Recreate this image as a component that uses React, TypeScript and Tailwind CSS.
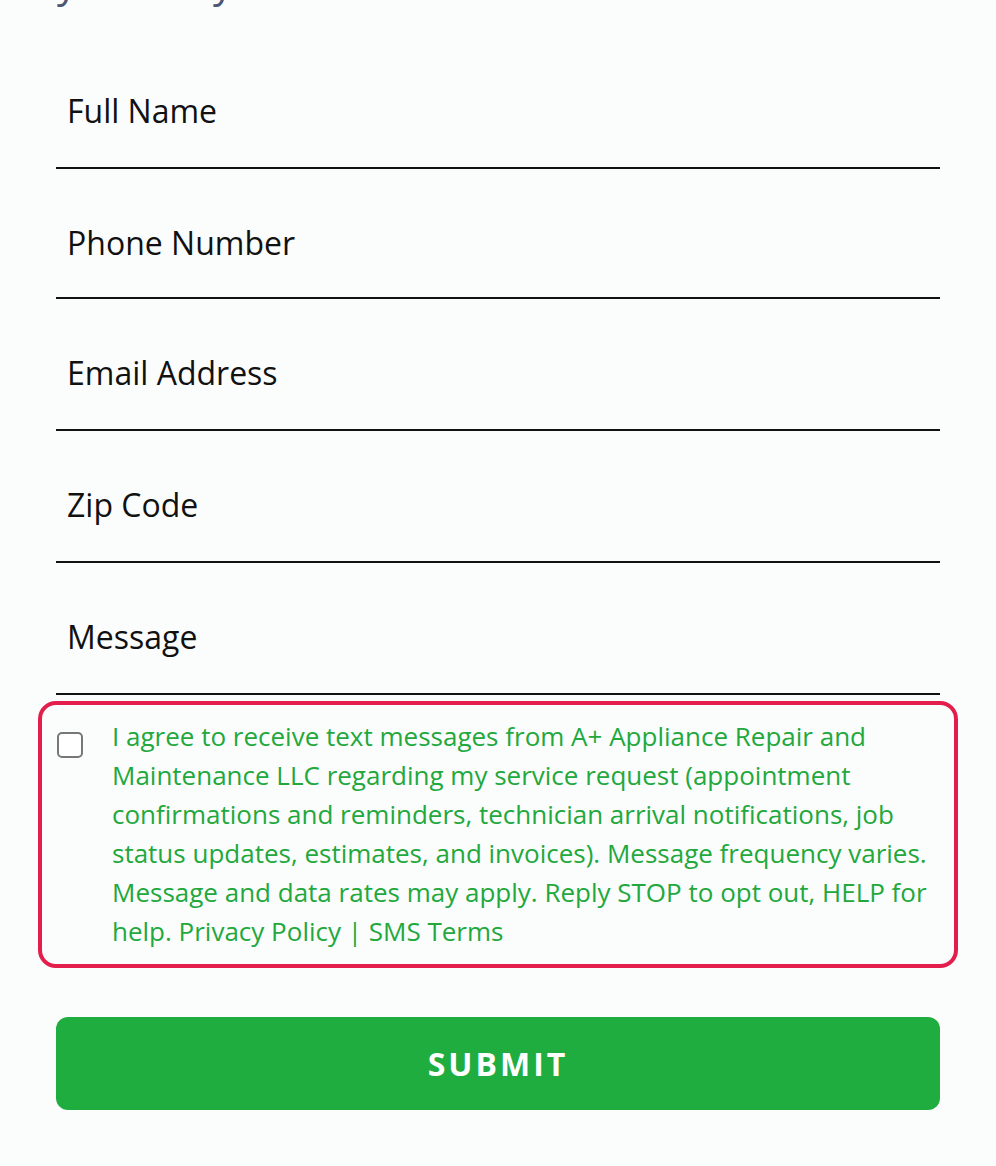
import React from 'react';

const fields = [
  { label: 'Full Name', h: 'h-[161px] pt-[47px]' },
  { label: 'Phone Number', h: 'h-[130px] pt-[19px]' },
  { label: 'Email Address', h: 'h-[132px] pt-[17px]' },
  { label: 'Zip Code', h: 'h-[132px] pt-[17px]' },
  { label: 'Message', h: 'h-[132px] pt-[17px]' },
];

export default function App() {
  return (
    <div className="min-h-[1166px] bg-[#fbfdfd] px-[56px] font-['Open_Sans',sans-serif]">
      {/* heading sits mostly above the fold, only the descenders peek in */}
      <div className="h-[8px] overflow-hidden">
        <div className="-mt-[40px] text-[40px] leading-[44px] text-[#4a5672]">
          <span className="pl-[1px]">y</span>
          <span className="pl-[136px]">y</span>
        </div>
      </div>

      <form className="flex flex-col">
        {fields.map(({ label, h }) => (
          <div
            key={label}
            className={`flex items-center border-b-2 border-[#111] px-[11px] text-[32px] text-[#111] ${h}`}
          >
            {label}
          </div>
        ))}

        <div className="-mx-[18px] mt-[6px] flex gap-[29px] rounded-[18px] border-4 border-[#e31e4c] pl-[15px] pr-[20px] pt-[12px] pb-[13px]">
          <span className="mt-[15px] h-[26px] w-[26px] shrink-0 rounded-[5px] border-2 border-[#777] bg-white" />
          <p className="text-[26px] leading-[39px] text-[#22a83c]">
            I agree to receive text messages from A+ Appliance Repair and Maintenance LLC regarding my service
            request (appointment confirmations and reminders, technician arrival notifications, job status updates,
            estimates, and invoices). Message frequency varies. Message and data rates may apply. Reply STOP to opt
            out, HELP for help. Privacy Policy | SMS Terms
          </p>
        </div>

        <button
          type="button"
          className="mt-[49px] flex h-[93px] items-center justify-center rounded-[12px] bg-[#20ad40] text-[32px] font-bold tracking-[3px] text-white"
        >
          SUBMIT
        </button>
      </form>
    </div>
  );
}
